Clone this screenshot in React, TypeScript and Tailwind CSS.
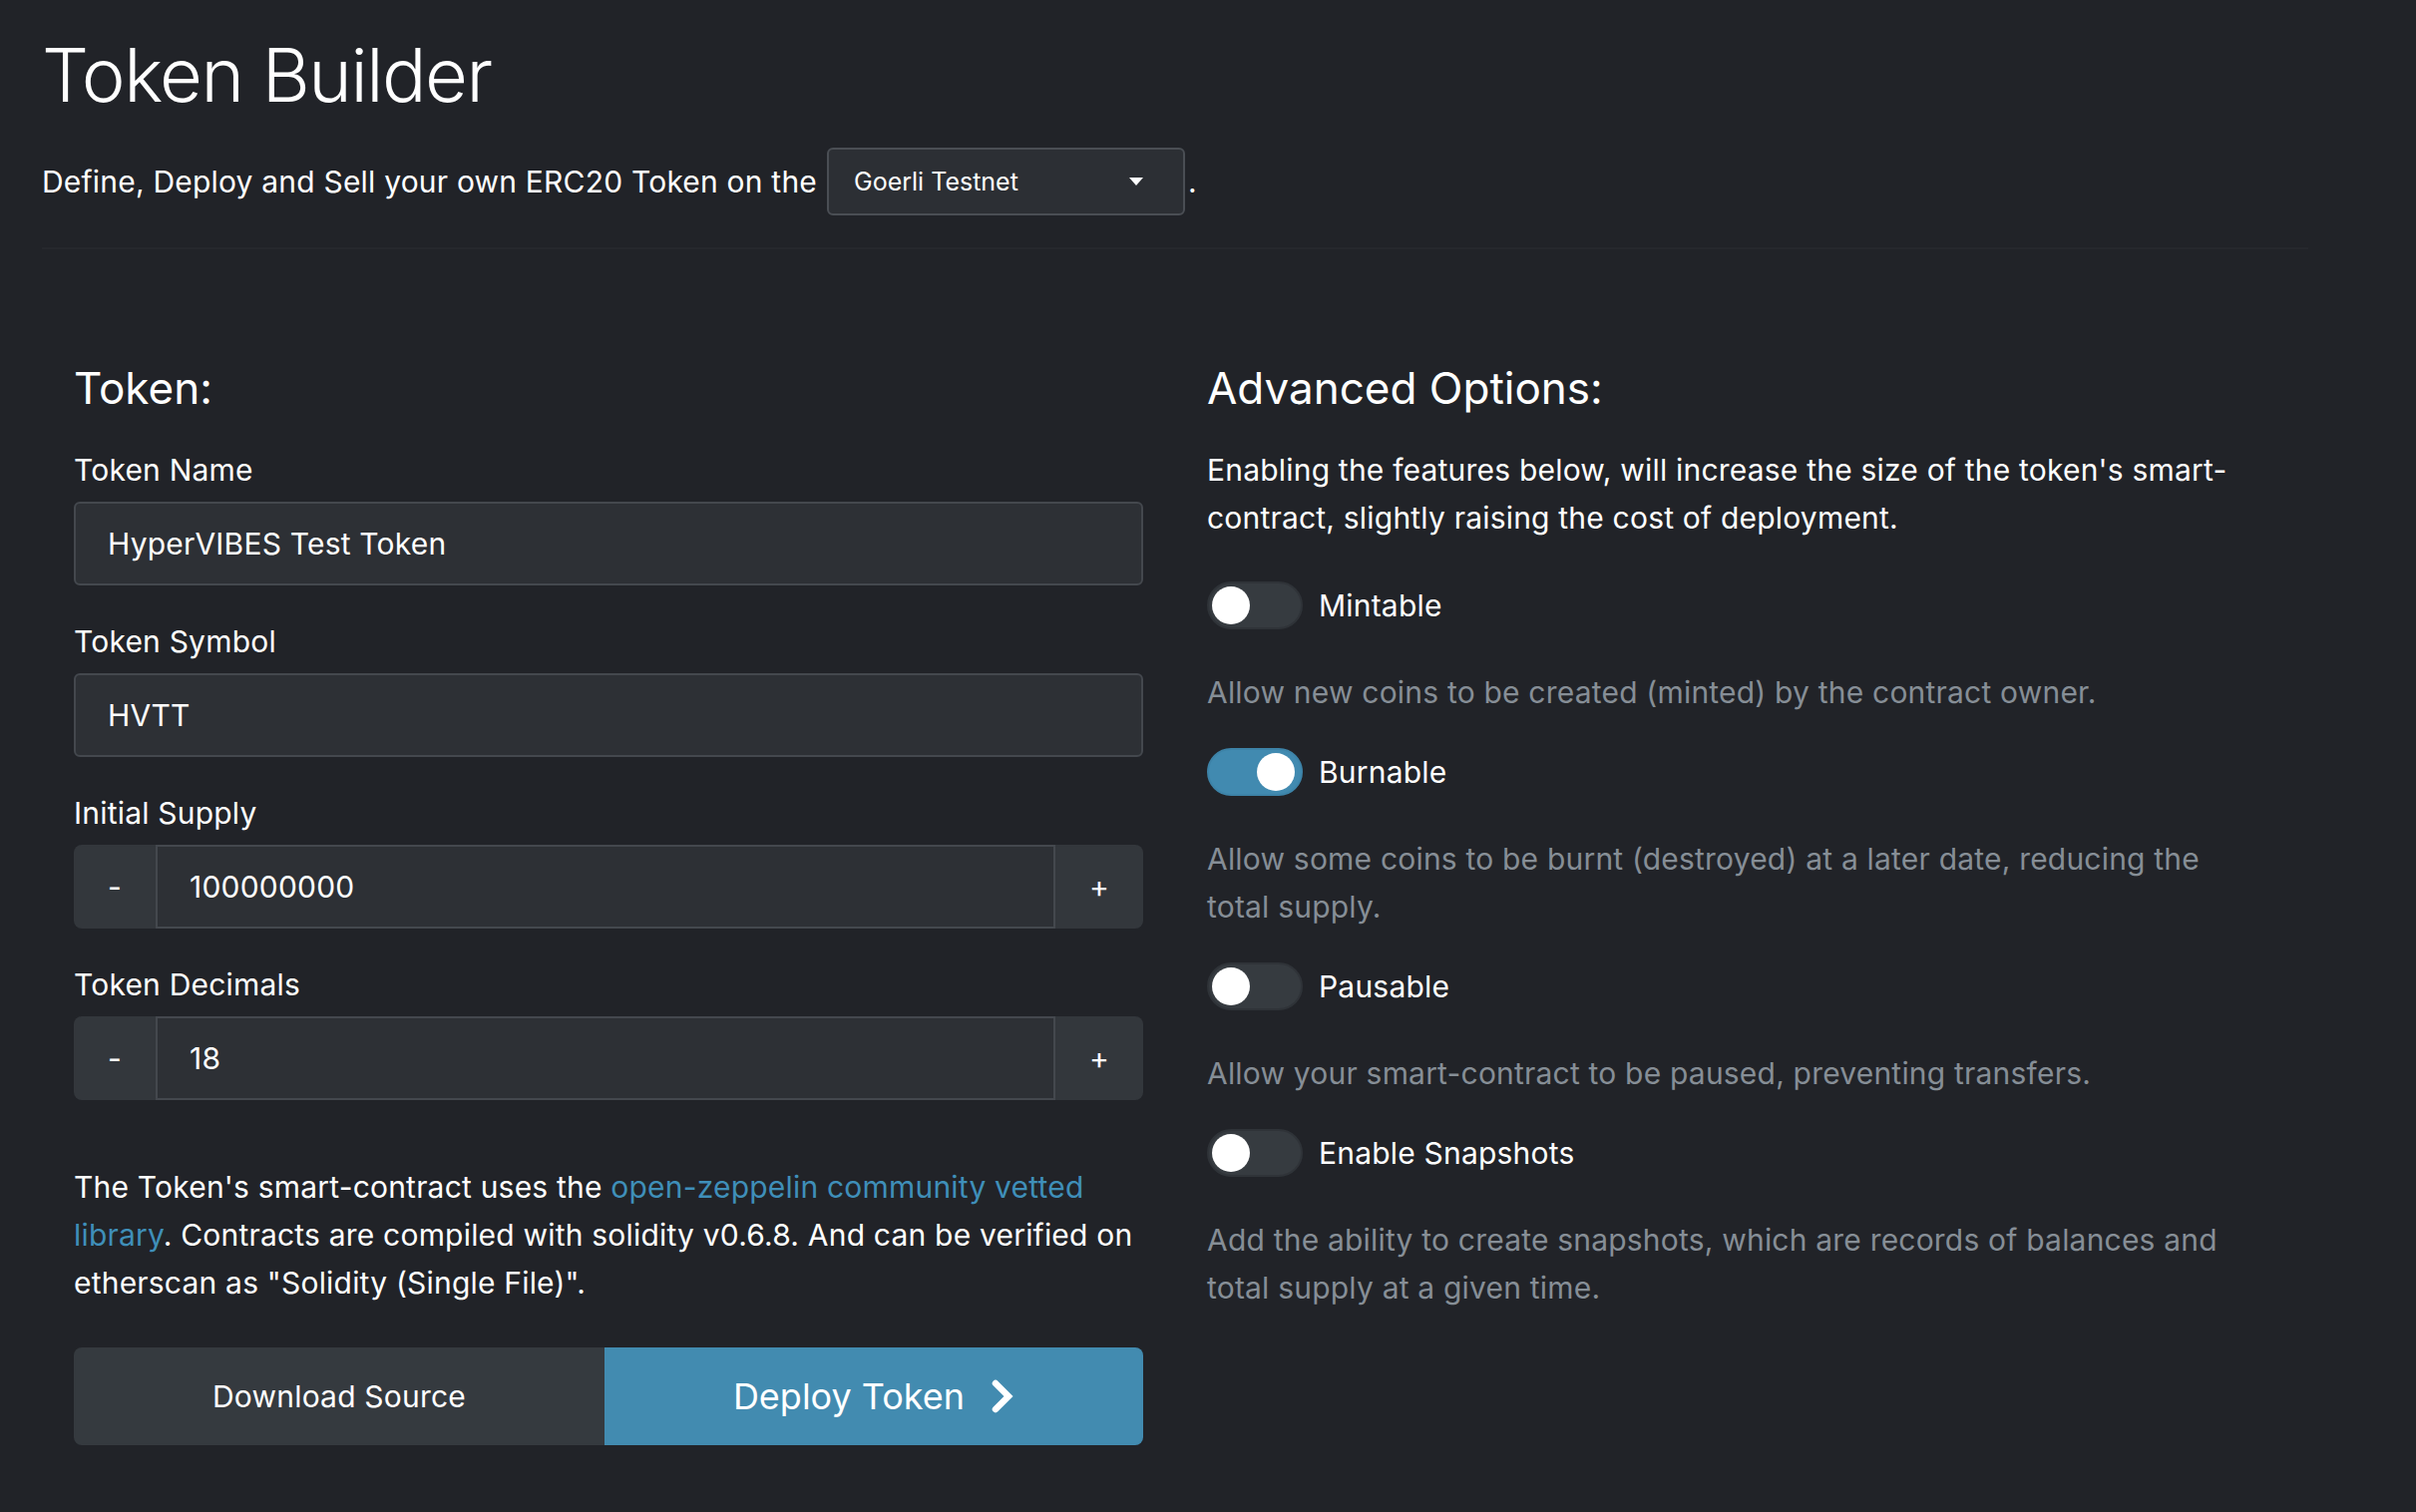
import React, { useState } from "react";

function Switch({ on }: { on: boolean }) {
  return (
    <div
      className={
        on
          ? "relative h-[48px] w-[96px] shrink-0 rounded-full bg-[#418ab0] border-2 border-[#3d83a8]"
          : "relative h-[48px] w-[96px] shrink-0 rounded-full bg-[#363b40] border-2 border-[#2f3338]"
      }
    >
      <div
        className={
          on
            ? "absolute top-[3px] right-[6px] h-[38px] w-[38px] rounded-full bg-white"
            : "absolute top-[3px] left-[3px] h-[38px] w-[38px] rounded-full bg-white"
        }
      />
    </div>
  );
}

function Option({
  label,
  desc,
  on,
  first,
}: {
  label: string;
  desc: string;
  on: boolean;
  first?: boolean;
}) {
  return (
    <div className={first ? "mt-[40px]" : "mt-[32px]"}>
      <div className="flex h-[48px] items-center gap-[16px]">
        <Switch on={on} />
        <span className="leading-[48px]">{label}</span>
      </div>
      <p className="mt-[39px] text-[#868e96]">{desc}</p>
    </div>
  );
}

function Stepper({ value }: { value: string }) {
  return (
    <div className="mt-[8px] flex h-[84px]">
      <div className="flex w-[82px] items-center justify-center rounded-l-[8px] bg-[#33373c]">-</div>
      <div className="flex flex-1 items-center border-2 border-[#44484e] bg-[#2d3035] pl-[32px]">{value}</div>
      <div className="flex w-[88px] items-center justify-center rounded-r-[8px] bg-[#33373c]">+</div>
    </div>
  );
}

function TextField({ value }: { value: string }) {
  return (
    <div className="mt-[8px] flex h-[84px] items-center rounded-[6px] border-2 border-[#44484e] bg-[#2d3035] pl-[32px]">
      {value}
    </div>
  );
}

export default function App() {
  const [opts] = useState([
    { label: "Mintable", on: false, desc: "Allow new coins to be created (minted) by the contract owner." },
    {
      label: "Burnable",
      on: true,
      desc: "Allow some coins to be burnt (destroyed) at a later date, reducing the total supply.",
    },
    { label: "Pausable", on: false, desc: "Allow your smart-contract to be paused, preventing transfers." },
    {
      label: "Enable Snapshots",
      on: false,
      desc: "Add the ability to create snapshots, which are records of balances and total supply at a given time.",
    },
  ]);

  return (
    <div className="min-h-screen w-full bg-[#212328] font-['Inter','Noto_Sans',sans-serif] text-[30px] leading-[48px] tracking-[0.2px] text-white">
      <div className="w-[2272px] pl-[42px] pt-[27px] box-content">
        <h1 className="text-[74px] font-light leading-[96px] tracking-[-1.5px]">Token Builder</h1>
        <div className="mt-[25px] flex h-[68px] items-center">
          <span>Define, Deploy and Sell your own ERC20 Token on the</span>
          <div className="ml-[10px] flex h-[68px] w-[359px] items-center justify-between rounded-[6px] border-2 border-[#4a4e54] bg-[#2c2f34] pl-[25px] pr-[40px] text-[25px] tracking-normal">
            <span>Goerli Testnet</span>
            <svg width="14" height="8" viewBox="0 0 14 8">
              <polygon points="0,0 14,0 7,8" fill="white" />
            </svg>
          </div>
          <span className="ml-[3px]">.</span>
        </div>
        <div className="mt-[32px] h-[2px] w-full bg-[#26282d]" />

        <div className="grid grid-cols-2 gap-[64px] px-[32px] pt-[110px]">
          <div>
            <h3 className="mb-[29px] text-[44px] leading-[58px] tracking-normal">Token:</h3>
            <label className="block">Token Name</label>
            <TextField value="HyperVIBES Test Token" />
            <label className="mt-[32px] block">Token Symbol</label>
            <TextField value="HVTT" />
            <label className="mt-[32px] block">Initial Supply</label>
            <Stepper value="100000000" />
            <label className="mt-[32px] block">Token Decimals</label>
            <Stepper value="18" />
            <p className="mt-[63px]">
              The Token's smart-contract uses the{" "}
              <span className="text-[#3f8fb9]">open-zeppelin community vetted library</span>. Contracts are compiled
              with solidity v0.6.8. And can be verified on etherscan as "Solidity (Single File)".
            </p>
            <div className="mt-[41px] flex h-[98px]">
              <button className="flex w-[532px] items-center justify-center rounded-l-[8px] bg-[#353a3f] text-[30px]">
                Download Source
              </button>
              <button className="flex flex-1 items-center justify-center gap-[26px] rounded-r-[8px] bg-[#428bb0] text-[36px] tracking-normal">
                <span>Deploy Token</span>
                <svg width="24" height="34" viewBox="0 0 24 34">
                  <polyline
                    points="5,4 18,17 5,30"
                    fill="none"
                    stroke="white"
                    strokeWidth="6.5"
                    strokeLinecap="round"
                    strokeLinejoin="miter"
                  />
                </svg>
              </button>
            </div>
          </div>
          <div className="max-w-[1032px]">
            <h3 className="mb-[29px] text-[44px] leading-[58px] tracking-normal">Advanced Options:</h3>
            <p>
              Enabling the features below, will increase the size of the token's smart-contract, slightly raising the
              cost of deployment.
            </p>
            {opts.map((o, i) => (
              <Option key={o.label} label={o.label} desc={o.desc} on={o.on} first={i === 0} />
            ))}
          </div>
        </div>
      </div>
    </div>
  );
}
